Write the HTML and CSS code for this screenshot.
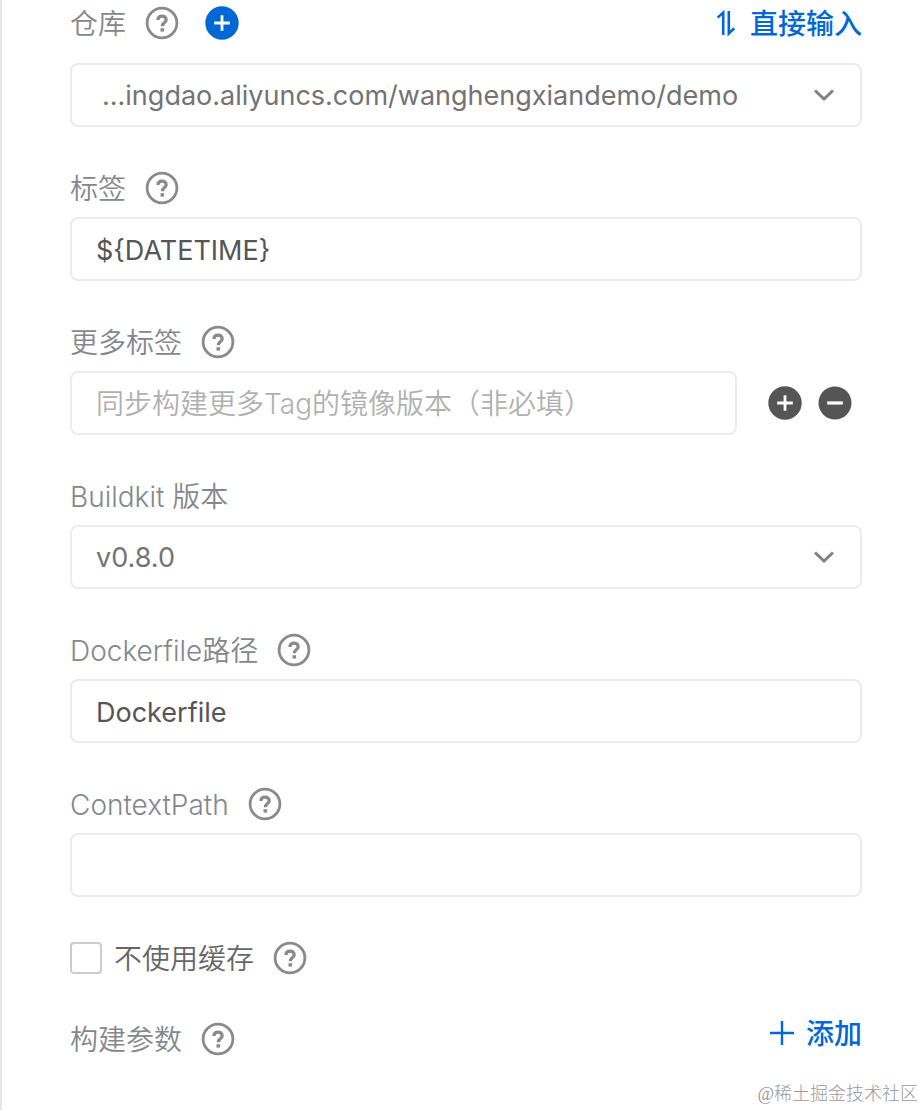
FILE: index.html
```html
<!DOCTYPE html>
<html lang="zh-CN">
<head>
  <meta charset="UTF-8">
  <meta name="viewport" content="width=device-width, initial-scale=1.0">
  <title>镜像构建</title>
  <link rel="stylesheet" href="styles.css">
</head>
<body>
  <!-- Shared icons -->
  <svg class="sprite" aria-hidden="true">
    <symbol id="icon-help" viewBox="0 0 34 34">
      <circle cx="17" cy="17" r="14.9" fill="none" stroke="currentColor" stroke-width="2.8"/>
      <path d="M12.9 14.1C12.9 11.5 14.6 10.1 17 10.1S21.2 11.5 21.2 13.7C21.2 16.5 17.4 16.7 17.4 20.2" fill="none" stroke="currentColor" stroke-width="3.2"/>
      <path d="M15.5 22.2h3.6v3.4h-3.6z" fill="currentColor"/>
    </symbol>
    <symbol id="icon-plus" viewBox="0 0 34 34">
      <circle cx="17" cy="17" r="16.7" fill="currentColor"/>
      <path d="M17 9.2v15.6M9.2 17h15.6" stroke="#fff" stroke-width="2.8"/>
    </symbol>
    <symbol id="icon-minus" viewBox="0 0 34 34">
      <circle cx="17" cy="17" r="16.5" fill="currentColor"/>
      <path d="M9.2 17h15.6" stroke="#fff" stroke-width="3.2"/>
    </symbol>
    <symbol id="icon-chevron" viewBox="0 0 24 16">
      <path d="M3 3.5l9 8.5 9-8.5" fill="none" stroke="currentColor" stroke-width="3"/>
    </symbol>
  </svg>

  <form class="panel">
    <div class="field field-repo">
      <div class="field-head">
        <label for="repo">仓库</label>
        <button type="button" class="icon-btn help" aria-label="帮助"><svg><use href="#icon-help"/></svg></button>
        <button type="button" class="icon-btn add-repo" aria-label="新增"><svg><use href="#icon-plus"/></svg></button>
        <button type="button" class="link-btn">
          <svg class="swap" viewBox="0 0 20 28" aria-hidden="true">
            <path d="M1.6 8.6L7.2 3.6v22.4M12.8 2v22.4L18.2 19.2" fill="none" stroke="currentColor" stroke-width="2.6"/>
          </svg>
          <span>直接输入</span>
        </button>
      </div>
      <div class="select-wrap">
        <select id="repo" class="control control-repo">
          <option>...ingdao.aliyuncs.com/wanghengxiandemo/demo</option>
        </select>
        <svg class="chevron"><use href="#icon-chevron"/></svg>
      </div>
    </div>

    <div class="field">
      <div class="field-head">
        <label for="tag">标签</label>
        <button type="button" class="icon-btn help" aria-label="帮助"><svg><use href="#icon-help"/></svg></button>
      </div>
      <input type="text" id="tag" class="control" value="${DATETIME}">
    </div>

    <div class="field">
      <div class="field-head">
        <label for="more-tags">更多标签</label>
        <button type="button" class="icon-btn help" aria-label="帮助"><svg><use href="#icon-help"/></svg></button>
      </div>
      <div class="tag-row">
        <input type="text" id="more-tags" class="control" placeholder="同步构建更多Tag的镜像版本（非必填）">
        <div class="tag-actions">
          <button type="button" class="icon-btn" aria-label="增加一行"><svg><use href="#icon-plus"/></svg></button>
          <button type="button" class="icon-btn" aria-label="删除一行"><svg><use href="#icon-minus"/></svg></button>
        </div>
      </div>
    </div>

    <div class="field">
      <div class="field-head">
        <label for="buildkit">Buildkit 版本</label>
      </div>
      <div class="select-wrap">
        <select id="buildkit" class="control">
          <option>v0.8.0</option>
        </select>
        <svg class="chevron"><use href="#icon-chevron"/></svg>
      </div>
    </div>

    <div class="field">
      <div class="field-head">
        <label for="dockerfile">Dockerfile路径</label>
        <button type="button" class="icon-btn help" aria-label="帮助"><svg><use href="#icon-help"/></svg></button>
      </div>
      <input type="text" id="dockerfile" class="control" value="Dockerfile">
    </div>

    <div class="field">
      <div class="field-head">
        <label for="context">ContextPath</label>
        <button type="button" class="icon-btn help" aria-label="帮助"><svg><use href="#icon-help"/></svg></button>
      </div>
      <input type="text" id="context" class="control">
    </div>

    <div class="field-head">
      <input type="checkbox" id="no-cache" class="checkbox">
      <label for="no-cache" class="check-label">不使用缓存</label>
      <button type="button" class="icon-btn help" aria-label="帮助"><svg><use href="#icon-help"/></svg></button>
    </div>

    <div class="field-head">
      <span>构建参数</span>
      <button type="button" class="icon-btn help" aria-label="帮助"><svg><use href="#icon-help"/></svg></button>
      <button type="button" class="link-btn link-add">
        <svg class="plus" viewBox="0 0 24 24" aria-hidden="true">
          <path d="M12 0v24M0 12h24" stroke="currentColor" stroke-width="2.4"/>
        </svg>
        <span>添加</span>
      </button>
    </div>
  </form>

  <div class="watermark">@稀土掘金技术社区</div>
</body>
</html>
```

FILE: styles.css
```css
:root {
  --primary: #0068d6;
  --label: #84888c;
  --text: #555;
  --border: #ebeced;
}
* {
  box-sizing: border-box;
}
body {
  position: relative;
  min-height: 100vh;
  margin: 0;
  border-left: 2px solid #e5e5e5;
  background: #fff;
  color: var(--label);
  font-family: Inter, "Noto Sans CJK SC", sans-serif;
  font-size: 28px;
  font-weight: 350;
  line-height: 40px;
}
button,
input,
select {
  font: inherit;
}
button {
  padding: 0;
  border: none;
  background: none;
  cursor: pointer;
}
.sprite {
  position: absolute;
  width: 0;
  height: 0;
}
.panel {
  display: flex;
  flex-direction: column;
  gap: 41px;
  padding: 3px 62px 50px 68px;
}
.field {
  display: flex;
  flex-direction: column;
  gap: 9px;
}
.field-repo {
  gap: 20px;
}
.field-head {
  display: flex;
  align-items: center;
  height: 40px;
}
.field-head label,
.field-head span {
  padding-top: 2px;
}
.icon-btn {
  width: 34px;
  height: 34px;
  flex: none;
  color: #555;
}
.icon-btn svg {
  display: block;
  width: 100%;
  height: 100%;
}
.help {
  margin-left: 19px;
  color: #8a8a8a;
}
.add-repo {
  margin-left: 26px;
  color: var(--primary);
}
.link-btn {
  display: flex;
  align-items: center;
  gap: 14px;
  margin-left: auto;
  color: var(--primary);
  font-weight: 500;
}
.link-add {
  gap: 12px;
  padding-bottom: 12px;
}
.swap {
  width: 20px;
  height: 28px;
}
.plus {
  width: 24px;
  height: 24px;
}
.control {
  display: block;
  width: 100%;
  height: 64px;
  padding: 2px 24px 0;
  border: 2px solid var(--border);
  border-radius: 8px;
  outline: none;
  background: #fff;
  color: var(--text);
  font-size: 27px;
  font-weight: 400;
  appearance: none;
}
.control::placeholder {
  color: #b0b0b0;
  font-size: 28px;
  font-weight: 350;
  opacity: 1;
}
select.control {
  padding-right: 60px;
  color: #737373;
}
select.control-repo {
  padding-left: 30px;
}
.select-wrap {
  position: relative;
}
.chevron {
  position: absolute;
  top: 24px;
  right: 26px;
  width: 24px;
  height: 16px;
  color: #808080;
  pointer-events: none;
}
.tag-row {
  display: flex;
  align-items: center;
  gap: 31px;
}
.tag-row .control {
  flex: 1;
}
.tag-actions {
  display: flex;
  gap: 16px;
  padding-right: 10px;
}
.checkbox {
  width: 32px;
  height: 32px;
  margin: 0 12px 0 0;
  border: 2px solid #ccc;
  border-radius: 4px;
  background: #fff;
  appearance: none;
}
.check-label {
  color: #666;
}
.watermark {
  position: absolute;
  right: 6px;
  bottom: 4px;
  color: #999;
  font-family: "Liberation Serif", "Noto Sans CJK SC", serif;
  font-size: 18px;
  font-weight: 300;
  line-height: 24px;
}
```
